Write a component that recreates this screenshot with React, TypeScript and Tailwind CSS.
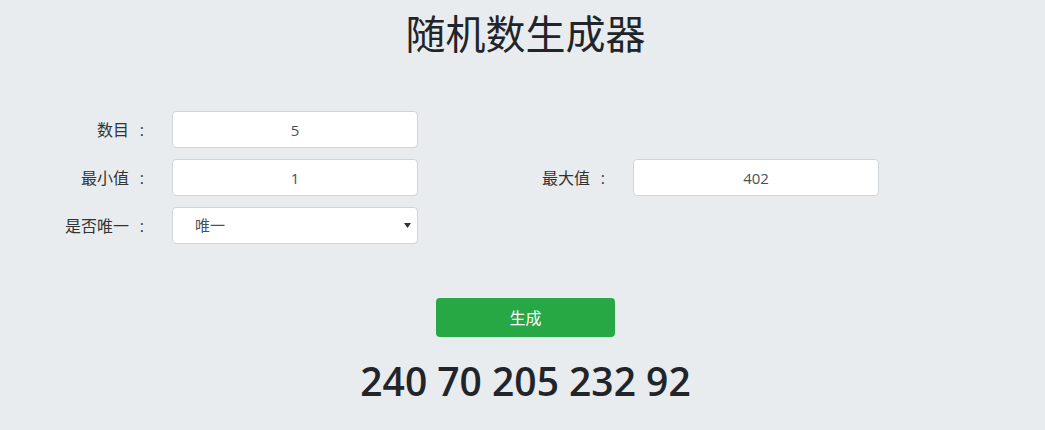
import React from "react";

const cjk = { fontFamily: '"Segoe UI", "Open Sans", "Noto Sans CJK SC", sans-serif' };

function Field({ value }: { value: string }) {
  return (
    <input
      readOnly
      value={value}
      className="w-[246px] h-[37px] rounded-[4px] border border-[#ced4da] bg-white text-center text-[15px] text-[#495057] outline-none"
    />
  );
}

function Label({ text, width }: { text: string; width: string }) {
  return (
    <div className={`${width} text-right text-[16px] text-[#333] pr-[26px]`}>
      {text}
      <span className="inline-block w-[17px] text-right pr-[2px]">:</span>
    </div>
  );
}

export default function App() {
  return (
    <div className="min-h-[430px] w-full bg-[#e9ecef] text-[#212529]" style={cjk}>
      <h1 className="pt-[8px] text-center text-[40px] leading-[52px] font-normal pl-[6px]">随机数生成器</h1>

      <div className="mt-[51px] flex flex-col gap-[11px]">
        <div className="flex items-center">
          <Label text="数目" width="w-[172px]" />
          <Field value="5" />
        </div>
        <div className="flex items-center">
          <Label text="最小值" width="w-[172px]" />
          <Field value="1" />
          <Label text="最大值" width="w-[215px]" />
          <Field value="402" />
        </div>
        <div className="flex items-center">
          <Label text="是否唯一" width="w-[172px]" />
          <div className="relative w-[246px] h-[37px] rounded-[4px] border border-[#ced4da] bg-white flex items-center pl-[22px] text-[15px] text-[#495057]">
            唯一
            <svg className="absolute right-[6px] top-[15px]" width="7" height="5" viewBox="0 0 7 5">
              <path d="M0 0H7L3.5 5Z" fill="#333" />
            </svg>
          </div>
        </div>
      </div>

      <div className="mt-[54px] flex justify-center pl-[6px]">
        <button className="w-[179px] h-[39px] rounded-[4px] bg-[#28a745] text-white text-[16px]">生成</button>
      </div>

      <div
        className="mt-[14px] text-center text-[39px] font-semibold leading-[60px] pl-[6px] text-[#212529]"
        style={{ fontFamily: '"Open Sans", "Noto Sans", sans-serif' }}
      >
        240 70 205 232 92
      </div>
    </div>
  );
}
